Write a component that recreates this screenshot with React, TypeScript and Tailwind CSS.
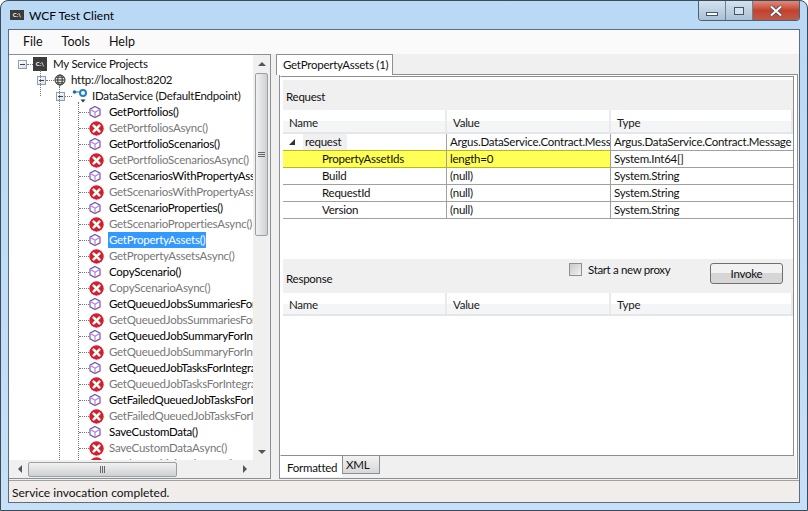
const methods: [string, boolean][] = [
  ['GetPortfolios()', true],
  ['GetPortfoliosAsync()', false],
  ['GetPortfolioScenarios()', true],
  ['GetPortfolioScenariosAsync()', false],
  ['GetScenariosWithPropertyAssets()', true],
  ['GetScenariosWithPropertyAssetsAsync()', false],
  ['GetScenarioProperties()', true],
  ['GetScenarioPropertiesAsync()', false],
  ['GetPropertyAssets()', true],
  ['GetPropertyAssetsAsync()', false],
  ['CopyScenario()', true],
  ['CopyScenarioAsync()', false],
  ['GetQueuedJobsSummariesForIntegration()', true],
  ['GetQueuedJobsSummariesForIntegrationAsync()', false],
  ['GetQueuedJobSummaryForIntegration()', true],
  ['GetQueuedJobSummaryForIntegrationAsync()', false],
  ['GetQueuedJobTasksForIntegration()', true],
  ['GetQueuedJobTasksForIntegrationAsync()', false],
  ['GetFailedQueuedJobTasksForIntegration()', true],
  ['GetFailedQueuedJobTasksForIntegrationAsync()', false],
  ['SaveCustomData()', true],
  ['SaveCustomDataAsync()', false],
  ['ApplySensitivityChanges()', false],
];

const rows = [
  { name: 'PropertyAssetIds', value: 'length=0', type: 'System.Int64[]', yellow: true },
  { name: 'Build', value: '(null)', type: 'System.String' },
  { name: 'RequestId', value: '(null)', type: 'System.String' },
  { name: 'Version', value: '(null)', type: 'System.String' },
];

function CubeIcon() {
  return (
    <svg width="12" height="14" viewBox="0 0 12 14" fill="none" stroke="#7a4fb5" strokeWidth="1.2" className="shrink-0">
      <path d="M6 1.5 11 4.2v5.6L6 12.5 1 9.8V4.2z" />
      <path d="M1 4.2l5 3 5-3M6 7.2v5.3" stroke="#a98ad6" />
    </svg>
  );
}

function ErrorIcon() {
  return (
    <svg width="15" height="15" viewBox="0 0 16 16" className="shrink-0">
      <circle cx="8" cy="8" r="7.7" fill="#d3202c" />
      <path d="M5 5l6 6M11 5l-6 6" stroke="#fff" strokeWidth="2.8" strokeLinecap="round" />
    </svg>
  );
}

function ConsoleIcon({ size = 'w-[14px] h-[14px]' }: { size?: string }) {
  return (
    <div className={`${size} shrink-0 bg-[#3c3c3c] flex items-center justify-center text-white text-[6px] font-bold leading-none tracking-normal`}>
      C:\
    </div>
  );
}

function Expander() {
  return (
    <div className="w-[9px] h-[9px] border border-[#8e9fb0] bg-gradient-to-br from-white to-[#d8dfe6] flex items-center justify-center shrink-0">
      <div className="w-[5px] h-px bg-[#33465a]" />
    </div>
  );
}

function ColumnHeader({ tall }: { tall?: boolean }) {
  const cells = [
    { label: 'Name', width: 'w-[164px]' },
    { label: 'Value', width: 'w-[164px]' },
    { label: 'Type', width: 'flex-1' },
  ];
  return (
    <div className={`flex shrink-0 bg-gradient-to-b from-white from-50% to-[#f4f5f6] to-50% border-b-2 border-[#e4e6e8] ${tall ? 'h-[24px]' : 'h-[23px]'}`}>
      {cells.map((c) => (
        <div key={c.label} className={`${c.width} pl-[6px] pt-[3px] flex items-center border-r-2 border-[#e8eaec] text-[#222]`}>
          {c.label}
        </div>
      ))}
    </div>
  );
}

export default function App() {
  return (
    <div
      className="w-[808px] h-[511px] overflow-hidden flex flex-col rounded-t-[8px] border border-[#3c4a58] bg-gradient-to-b from-[#b9d9f5] to-[#c6e0f7] text-[11.5px] text-[#111] tracking-[-0.25px]"
      style={{ fontFamily: 'Lato, "Noto Sans", sans-serif' }}
    >
      {/* title bar */}
      <div className="h-[28px] shrink-0 flex items-start relative pl-[9px]">
        <div className="mt-[9px]">
          <ConsoleIcon size="w-[14px] h-[10px]" />
        </div>
        <div className="ml-[5px] mt-[6px] text-[12px] leading-[17px] text-black tracking-normal">WCF Test Client</div>
        <div className="ml-auto mr-[7px] flex h-[20px] w-[102px] border border-t-0 border-[#4d6274] rounded-b-[4px] overflow-hidden">
          <div className="w-[27px] border-r border-[#6a8296] bg-gradient-to-b from-[#d3e2ef] to-[#a9c0d4] flex items-end justify-center pb-[4px]">
            <div className="w-[12px] h-[4px] bg-white border border-[#44576a]" />
          </div>
          <div className="w-[27px] border-r border-[#6a8296] bg-gradient-to-b from-[#d3e2ef] to-[#a9c0d4] flex items-center justify-center">
            <div className="w-[10px] h-[8px] bg-[#d6e3ee] border border-[#44576a]" />
          </div>
          <div className="flex-1 bg-gradient-to-b from-[#dd8a7c] via-[#c6402c] to-[#bb5b4a] flex items-center justify-center">
            <svg width="14" height="12" viewBox="0 0 14 12">
              <path d="M2 1.5l10 9M12 1.5l-10 9" stroke="#44505c" strokeWidth="3.6" />
              <path d="M2 1.5l10 9M12 1.5l-10 9" stroke="#fff" strokeWidth="2" />
            </svg>
          </div>
        </div>
      </div>

      {/* client area */}
      <div className="flex-1 min-h-0 mx-[7px] mb-[7px] border border-[#5c6c7c] bg-[#f0f0f0] flex flex-col">
        {/* menu */}
        <div className="h-[24px] shrink-0 bg-[#fafafa] flex items-center pl-[14px] pt-px gap-[19px] text-[12.5px] tracking-normal">
          <span>File</span>
          <span>Tools</span>
          <span>Help</span>
        </div>

        <div className="flex-1 min-h-0 flex">
          {/* tree panel */}
          <div className="w-[262px] shrink-0 border border-[#8a8f94] border-l-0 flex flex-col bg-white">
            <div className="flex-1 min-h-0 flex">
              <div className="flex-1 min-w-0 overflow-hidden relative pt-px whitespace-nowrap">
                <div className="absolute left-[31px] top-[15px] h-[26px] border-l border-dotted border-[#777]" />
                <div className="absolute left-[50px] top-[31px] h-[400px] border-l border-dotted border-[#777]" />
                <div className="absolute left-[69px] top-[47px] h-[400px] border-l border-dotted border-[#777]" />

                <div className="h-[16px] flex items-center pl-[9px]">
                  <Expander />
                  <div className="w-[6px] shrink-0 border-t border-dotted border-[#777]" />
                  <ConsoleIcon />
                  <span className="ml-[6px]">My Service Projects</span>
                </div>
                <div className="h-[16px] flex items-center pl-[28px]">
                  <Expander />
                  <div className="w-[8px] shrink-0 border-t border-dotted border-[#777]" />
                  <svg width="12" height="12" viewBox="0 0 12 12" fill="none" stroke="#333" strokeWidth="1" className="shrink-0">
                    <circle cx="6" cy="6" r="5" fill="#e8e8e8" />
                    <ellipse cx="6" cy="6" rx="2.2" ry="5" />
                    <path d="M1 6h10M2 3.2h8M2 8.8h8" />
                  </svg>
                  <span className="ml-[5px]">http://localhost:8202</span>
                </div>
                <div className="h-[16px] flex items-center pl-[47px]">
                  <Expander />
                  <div className="w-[7px] shrink-0 border-t border-dotted border-[#777]" />
                  <svg width="16" height="16" viewBox="0 0 16 16" fill="none" className="shrink-0">
                    <circle cx="2.5" cy="4" r="1.8" fill="#1b6fa8" />
                    <path d="M4 4h4" stroke="#1b6fa8" strokeWidth="1.2" />
                    <circle cx="11" cy="5" r="3" stroke="#1b85c4" strokeWidth="2" />
                    <path d="M8.5 11.5h5l-2.5 3z" fill="#333" />
                  </svg>
                  <span className="ml-[4px]">IDataService (DefaultEndpoint)</span>
                </div>

                {methods.map(([name, ok]) => {
                  const selected = name === 'GetPropertyAssets()';
                  return (
                    <div key={name} className="h-[16px] flex items-center pl-[70px]">
                      <div className="w-[10px] shrink-0 border-t border-dotted border-[#777]" />
                      <div className="w-[15px] shrink-0 flex items-center">
                        {ok ? <CubeIcon /> : <ErrorIcon />}
                      </div>
                      <span
                        className={`ml-[4px] px-px leading-[16px] ${
                          selected ? 'bg-[#3399ff] text-white' : ok ? 'text-black' : 'text-[#777]'
                        }`}
                      >
                        {name}
                      </span>
                    </div>
                  );
                })}
              </div>

              {/* vertical scrollbar */}
              <div className="w-[17px] shrink-0 bg-[#f0f0f0] flex flex-col items-center">
                <div className="h-[18px] shrink-0 flex items-center justify-center">
                  <div className="border-x-[4px] border-x-transparent border-b-[4px] border-b-[#555]" />
                </div>
                <div className="h-[163px] w-[13px] border border-[#9a9fa4] rounded-[2px] bg-gradient-to-r from-[#f2f2f2] to-[#cfd0d2] flex flex-col items-center justify-center gap-px">
                  <div className="w-[7px] h-px bg-[#666]" />
                  <div className="w-[7px] h-px bg-[#666]" />
                  <div className="w-[7px] h-px bg-[#666]" />
                </div>
                <div className="mt-auto h-[17px] flex items-center justify-center">
                  <div className="border-x-[4px] border-x-transparent border-t-[4px] border-t-[#555]" />
                </div>
              </div>
            </div>

            {/* horizontal scrollbar */}
            <div className="h-[18px] shrink-0 bg-[#f0f0f0] flex items-center pl-[9px] pr-[23px]">
              <div className="border-y-[4px] border-y-transparent border-r-[4px] border-r-[#555]" />
              <div className="ml-[6px] w-[149px] h-[15px] border border-[#9a9fa4] rounded-[2px] bg-gradient-to-b from-[#f2f2f2] to-[#cfd0d2] flex items-center justify-center gap-px">
                <div className="w-px h-[7px] bg-[#666]" />
                <div className="w-px h-[7px] bg-[#666]" />
                <div className="w-px h-[7px] bg-[#666]" />
              </div>
              <div className="ml-auto border-y-[4px] border-y-transparent border-l-[4px] border-l-[#555]" />
            </div>
          </div>

          {/* right side */}
          <div className="flex-1 min-w-0 ml-[5px] mr-px flex flex-col">
            <div className="h-[20px] shrink-0 flex">
              <div className="w-[117px] h-[21px] relative z-10 border border-b-0 border-[#8a8f94] bg-white flex items-center pl-[6px] whitespace-nowrap">
                GetPropertyAssets (1)
              </div>
            </div>
            <div className="flex-1 min-h-0 ml-[3px] border border-[#8a8f94] bg-white pt-px pr-[3px] flex flex-col">
              <div className="flex-1 min-h-0 border border-[#8a8f94] border-l-white pt-[3px] pl-[2px] flex flex-col">
                <div className="h-[30px] shrink-0 bg-[#f0f0f0] flex items-center pl-[3px] pt-[4px]">Request</div>
                <ColumnHeader tall />
                <div className="flex h-[17px] shrink-0 border-b border-[#a0a0a0]">
                  <div className="w-[164px] flex items-center border-r border-[#a0a0a0]">
                    <div className="ml-[6px] border-l-[6px] border-l-transparent border-b-[6px] border-b-[#333]" />
                    <span className="ml-[8px] pr-[6px] pl-[2px] bg-[#f0f0f0] h-full flex items-center">request</span>
                  </div>
                  <div className="w-[164px] pl-[3px] flex items-center border-r border-[#a0a0a0] overflow-hidden whitespace-nowrap">
                    Argus.DataService.Contract.Messages
                  </div>
                  <div className="flex-1 min-w-0 pl-[3px] flex items-center overflow-hidden whitespace-nowrap">
                    Argus.DataService.Contract.Message
                  </div>
                </div>
                {rows.map((r) => (
                  <div key={r.name} className="flex h-[17px] shrink-0 border-b border-[#a0a0a0]">
                    <div className={`w-[164px] pl-[39px] flex items-center border-r border-[#a0a0a0] ${r.yellow ? 'h-[18px] -mt-px bg-[#ffff55] border-y border-y-[#b8b820]' : ''}`}>
                      {r.name}
                    </div>
                    <div className={`w-[164px] pl-[3px] flex items-center border-r border-[#a0a0a0] ${r.yellow ? 'h-[18px] -mt-px bg-[#ffff55] border-y border-y-[#b8b820]' : ''}`}>
                      {r.value}
                    </div>
                    <div className="flex-1 pl-[3px] flex items-center">{r.type}</div>
                  </div>
                ))}
                <div className="h-[40px] shrink-0" />
                <div className="h-[34px] shrink-0 bg-[#f0f0f0] flex pl-[3px]">
                  <span className="mt-[12px] leading-[16px]">Response</span>
                  <div className="ml-auto mt-[4px] mr-[10px] flex items-start">
                    <div className="w-[13px] h-[13px] border border-[#8e8f8f] bg-gradient-to-br from-[#c9c9c9] to-[#f2f2f2] mr-[6px]" />
                    <span className="leading-[14px] w-[122px] tracking-[-0.35px]">Start a new proxy</span>
                    <div className="w-[73px] h-[21px] pt-px border border-[#707070] rounded-[3px] bg-gradient-to-b from-[#f2f2f2] from-50% to-[#d6d6d6] to-50% flex items-center justify-center">
                      Invoke
                    </div>
                  </div>
                </div>
                <ColumnHeader />
                <div className="flex-1" />
              </div>
              <div className="h-[22px] shrink-0 -mr-[2px] bg-[#f0f0f0] flex items-start">
                <div className="w-[62px] h-[21px] bg-white flex items-center pl-[7px] pt-[2px]">Formatted</div>
                <div className="w-[38px] h-[18px] border border-t-0 border-[#8a8f94] bg-gradient-to-b from-[#f2f2f2] to-[#d8d8d8] flex items-center pl-[3px] pt-px">
                  XML
                </div>
              </div>
            </div>
          </div>
        </div>

        {/* status bar */}
        <div className="h-[22px] shrink-0 mt-px bg-[#f0edeb] border-t border-[#a0a0a0] flex items-center pl-[3px] pt-[3px] text-[12px] tracking-normal">
          Service invocation completed.
        </div>
      </div>
    </div>
  );
}
